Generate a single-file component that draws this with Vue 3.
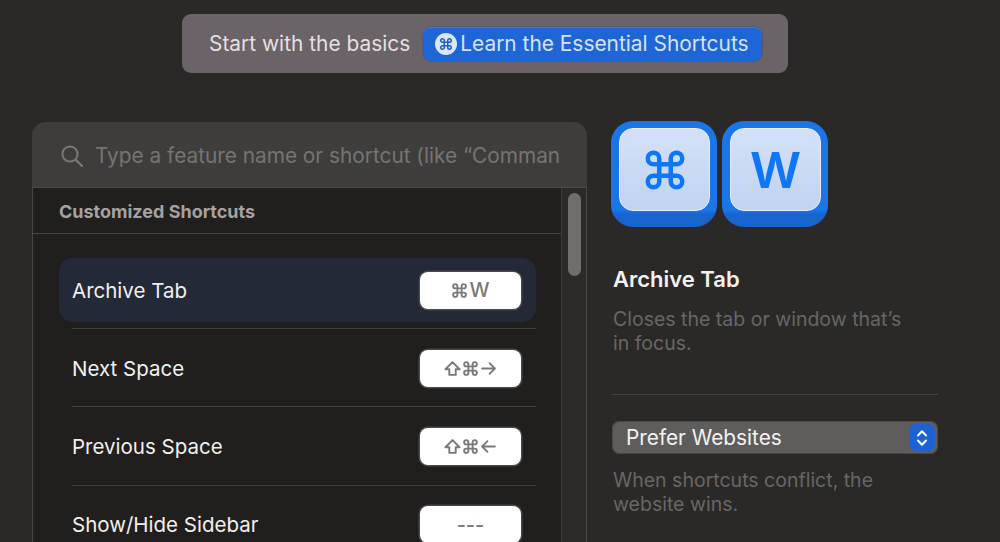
<template>
  <div class="page">
    <div class="banner">
      <span class="banner-text">Start with the basics</span>
      <button class="learn-btn">
        <span class="learn-icon">
          <svg width="14" height="14" viewBox="0 0 24 24" fill="none">
            <path :d="cmdPath" stroke="#1e5ec8" stroke-width="2.6" />
          </svg>
        </span>
        <span>Learn the Essential Shortcuts</span>
      </button>
    </div>

    <div class="main">
      <section class="panel">
        <div class="search">
          <svg class="search-icon" width="24" height="24" viewBox="0 0 24 24" fill="none">
            <circle cx="10" cy="10" r="7.6" stroke="#7b7977" stroke-width="2" />
            <path d="M15.6 15.6L22 22" stroke="#7b7977" stroke-width="2.2" stroke-linecap="round" />
          </svg>
          <span class="placeholder">Type a feature name or shortcut (like “Comman</span>
        </div>
        <div class="panel-body">
          <div class="list">
            <div class="list-header">Customized Shortcuts</div>
            <div class="rows">
              <div
                v-for="(item, i) in shortcuts"
                :key="item.name"
                class="row"
                :class="{ selected: i === 0 }"
              >
                <span class="row-name">{{ item.name }}</span>
                <span class="keycap">
                  <template v-for="k in item.keys" :key="k">
                    <svg v-if="glyphs[k]" class="glyph" width="17" height="17" viewBox="0 0 24 24" fill="none">
                      <path :d="glyphs[k]" stroke="#7a7a7a" stroke-width="2.7" stroke-linecap="round" stroke-linejoin="round" />
                    </svg>
                    <span v-else>{{ k }}</span>
                  </template>
                </span>
              </div>
            </div>
          </div>
          <div class="scroll-track">
            <div class="scroll-thumb"></div>
          </div>
        </div>
      </section>

      <aside class="side">
        <div class="keys">
          <div class="big-key">
            <div class="big-key-face">
              <svg width="46" height="46" viewBox="0 0 24 24" fill="none">
                <path :d="cmdPath" stroke="#0f76f5" stroke-width="2.35" />
              </svg>
            </div>
          </div>
          <div class="big-key"><div class="big-key-face">W</div></div>
        </div>
        <h2 class="title">Archive Tab</h2>
        <p class="desc">Closes the tab or window that’s<br />in focus.</p>
        <hr class="divider" />
        <div class="select">
          <span>Prefer Websites</span>
          <span class="select-stepper">
            <svg width="12" height="20" viewBox="0 0 12 20" fill="none">
              <path d="M2 7.5L6 3.2L10 7.5M2 12.5L6 16.8L10 12.5" stroke="#fff" stroke-width="2" stroke-linecap="round" stroke-linejoin="round" />
            </svg>
          </span>
        </div>
        <p class="hint">When shortcuts conflict, the<br />website wins.</p>
      </aside>
    </div>
  </div>
</template>

<script setup>
const cmdPath = 'M15 6v12a3 3 0 1 0 3-3H6a3 3 0 1 0 3 3V6a3 3 0 1 0-3 3h12a3 3 0 1 0-3-3'

const glyphs = {
  cmd: cmdPath,
  shift: 'M12 3L22 13H16.5V21H7.5V13H2Z',
  right: 'M3 12H21M13.5 4.5L21 12L13.5 19.5',
  left: 'M21 12H3M10.5 4.5L3 12L10.5 19.5',
}

const shortcuts = [
  { name: 'Archive Tab', keys: ['cmd', 'W'] },
  { name: 'Next Space', keys: ['shift', 'cmd', 'right'] },
  { name: 'Previous Space', keys: ['shift', 'cmd', 'left'] },
  { name: 'Show/Hide Sidebar', keys: ['---'] },
]
</script>

<style>
html,
body {
  background: #2b2928;
}
</style>

<style scoped>
.page {
  width: 1000px;
  height: 542px;
  box-sizing: border-box;
  padding-top: 14px;
  overflow: hidden;
  background: #2b2928;
  font-family: Inter, "Liberation Sans", sans-serif;
}

.banner {
  width: 606px;
  height: 59px;
  margin-left: 182px;
  box-sizing: border-box;
  padding-left: 27px;
  display: flex;
  align-items: center;
  gap: 13px;
  background: #6a6367;
  border-radius: 9px;
}

.banner-text {
  color: #e4dfe1;
  font-size: 20.9px;
}

.learn-btn {
  width: 339px;
  height: 34px;
  box-sizing: border-box;
  padding: 0 0 0 12px;
  display: flex;
  align-items: center;
  gap: 3px;
  border: none;
  border-radius: 8px;
  background: #1e65d6;
  box-shadow: inset 0 1px 0 #3a7ce0, 0 0 0 1px #59586a;
  color: #d6e2f8;
  font-family: inherit;
  font-size: 20.9px;
  white-space: nowrap;
}

.learn-icon {
  width: 22px;
  height: 22px;
  border-radius: 50%;
  background: #dbe6f8;
  display: flex;
  align-items: center;
  justify-content: center;
  flex: none;
}

.main {
  margin-top: 49px;
  padding-left: 32px;
  display: flex;
  gap: 25px;
}

.panel {
  width: 555px;
  height: 500px;
  flex: none;
  box-sizing: border-box;
  display: flex;
  flex-direction: column;
  border-radius: 14px 14px 0 0;
  overflow: hidden;
}

.search {
  height: 66px;
  flex: none;
  box-sizing: border-box;
  padding: 2px 0 0 28px;
  display: flex;
  align-items: center;
  gap: 11px;
  background: #3f3d3c;
  border-bottom: 1px solid #4c4a49;
}

.placeholder {
  color: #767472;
  font-size: 20.8px;
  white-space: nowrap;
}

.panel-body {
  flex: 1;
  display: flex;
  min-height: 0;
}

.list {
  flex: 1;
  min-width: 0;
  background: #211f1e;
  border-left: 1px solid #484645;
  border-right: 1px solid #3d3b3a;
}

.list-header {
  height: 46px;
  box-sizing: border-box;
  padding: 2px 0 0 26px;
  display: flex;
  align-items: center;
  color: #a5a29f;
  font-size: 18px;
  font-weight: 700;
  border-bottom: 1px solid #464443;
}

.rows {
  padding: 24px 25px 0 26px;
}

.row {
  height: 64px;
  margin-bottom: 14.3px;
  padding: 0 15px 0 13px;
  display: flex;
  align-items: center;
  justify-content: space-between;
  position: relative;
  border-radius: 14px;
}

.row::after {
  content: "";
  position: absolute;
  left: 13px;
  right: 0;
  bottom: -7px;
  height: 1px;
  background: #403e3d;
}

.row.selected {
  background: #232936;
}

.row-name {
  color: #f1efee;
  font-size: 20.5px;
}

.keycap {
  width: 101px;
  height: 37px;
  display: flex;
  align-items: center;
  justify-content: center;
  gap: 1px;
  background: #fff;
  border-radius: 8px;
  box-shadow: 0 0 0 1.5px #49494b;
  color: #7a7a7a;
  font-size: 20px;
  font-weight: 500;
}

.scroll-track {
  width: 25px;
  flex: none;
  background: #2b2a29;
  border-right: 1px solid #484645;
  box-sizing: border-box;
  padding: 5px 0 0 6px;
}

.scroll-thumb {
  width: 13px;
  height: 83px;
  background: #6f6e6d;
  border-radius: 7px;
}

.side {
  width: 326px;
  flex: none;
}

.keys {
  display: flex;
  gap: 5px;
  margin-left: -1px;
  margin-top: -1px;
}

.big-key {
  width: 106px;
  height: 106px;
  box-sizing: border-box;
  padding: 7px 7px 16px 8px;
  background: linear-gradient(#1a75e8 0 84%, #1764cf 88%);
  border-radius: 22px;
}

.big-key-face {
  height: 83px;
  box-sizing: border-box;
  display: flex;
  align-items: center;
  justify-content: center;
  background: linear-gradient(#d4e1f8, #c1d3f0);
  border: 1px solid #e8effb;
  border-radius: 14px;
  color: #0f76f5;
  font-size: 50px;
  font-weight: 600;
}

.title {
  margin: 38px 0 0 1px;
  color: #f3f1f0;
  font-size: 22px;
  font-weight: 600;
  line-height: 28px;
}

.desc,
.hint {
  margin: 0 0 0 1px;
  font-size: 19.5px;
  line-height: 24px;
  color: #686664;
}

.desc {
  margin-top: 14px;
}

.divider {
  margin: 39px 0 26px;
  border: none;
  height: 1px;
  background: #444241;
}

.select {
  height: 33px;
  box-sizing: border-box;
  padding: 0 3px 0 14px;
  display: flex;
  align-items: center;
  justify-content: space-between;
  background: #5f5d5c;
  border-radius: 8px;
  box-shadow: inset 0 0 0 1px #4a4847;
  color: #f4f2f1;
  font-size: 20.8px;
}

.select-stepper {
  width: 26px;
  height: 27px;
  display: flex;
  align-items: center;
  justify-content: center;
  background: #1c62d4;
  border-radius: 7px;
}

.hint {
  margin-top: 14px;
}
</style>
